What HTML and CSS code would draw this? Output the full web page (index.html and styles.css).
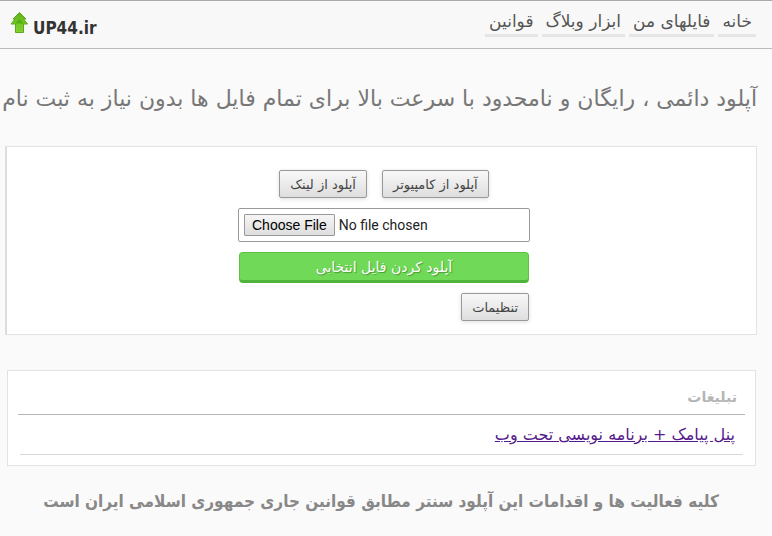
FILE: index.html
```html
<!DOCTYPE html>
<html lang="fa" dir="rtl">
<head>
    <meta charset="UTF-8">
    <meta name="viewport" content="width=device-width, initial-scale=1.0">
    <title>UP44.ir</title>
    <link rel="stylesheet" href="styles.css">
</head>
<body>

    <!-- Header -->
    <header class="header">
        <nav class="menu">
            <a href="#">خانه</a>
            <a href="#">فایلهای من</a>
            <a href="#">ابزار وبلاگ</a>
            <a href="#">قوانین</a>
        </nav>
        <div class="brand" dir="ltr">
            <svg class="logo" width="19" height="22" viewBox="0 0 19 22">
                <defs>
                    <linearGradient id="leaf" x1="0" y1="0" x2="0" y2="1">
                        <stop offset="0" stop-color="#5fb41a"/>
                        <stop offset="1" stop-color="#8ad62c"/>
                    </linearGradient>
                </defs>
                <path d="M10.500 1.500 L17 8 H14.500 L18.500 13 H14.500 V21.500 H6.500 V13 H2 L6 8 H4 Z" fill="url(#leaf)" stroke="#5aa81c" stroke-linejoin="round"/>
                <path d="M10.500 8 L15 12.500 H6 Z" fill="#56ad14"/>
                <path d="M8 13 H13 V20 H8 Z" fill="#7ac92b"/>
            </svg>
            <span>UP44.ir</span>
        </div>
    </header>

    <main class="content">
        <h1 class="slogan">آپلود دائمی ، رایگان و نامحدود با سرعت بالا برای تمام فایل ها بدون نیاز به ثبت نام</h1>

        <!-- Upload box -->
        <form class="upload">
            <div class="tabs">
                <button type="button" class="btn">آپلود از کامپیوتر</button>
                <button type="button" class="btn">آپلود از لینک</button>
            </div>
            <input type="file" class="file" dir="ltr" aria-label="انتخاب فایل">
            <button type="button" class="send">آپلود کردن فایل انتخابی</button>
            <div class="options">
                <button type="button" class="btn">تنظیمات</button>
            </div>
        </form>

        <!-- Ads -->
        <section class="ads">
            <h2>تبلیغات</h2>
            <div class="ad">
                <a href="#">پنل پیامک + برنامه نویسی تحت وب</a>
            </div>
        </section>
    </main>

    <footer class="footer">کلیه فعالیت ها و اقدامات این آپلود سنتر مطابق قوانین جاری جمهوری اسلامی ایران است</footer>

</body>
</html>
```
FILE: styles.css
```css
* {
    box-sizing: border-box;
}
body {
    margin: 0;
    background: #fafafa;
    color: #333;
    font-family: "DejaVu Sans", sans-serif;
}
.header {
    display: flex;
    justify-content: space-between;
    align-items: flex-start;
    height: 49px;
    padding: 8px 16px 0 9px;
    background: #f8f8f8;
    border-top: 1px solid #aaa;
    border-bottom: 1px solid #bbb;
}
.menu {
    display: flex;
    gap: 4px;
}
.menu a {
    padding: 0 4px;
    height: 28px;
    border-bottom: 3px solid #e5e5e5;
    color: #555;
    font-size: 17px;
    line-height: 25px;
    text-decoration: none;
}
.brand {
    display: flex;
    gap: 5px;
    padding-top: 2px;
    font-family: "DejaVu Sans Condensed", "DejaVu Sans", sans-serif;
    font-size: 17px;
    font-weight: bold;
    line-height: 34px;
}
.content {
    padding: 0 15px 0 5px;
}
.slogan {
    margin: 0;
    padding: 33px 0 30px;
    color: #777;
    font-size: 22px;
    font-weight: normal;
    line-height: 34px;
    white-space: nowrap;
}
.upload {
    display: flex;
    flex-direction: column;
    align-items: center;
    gap: 10px;
    padding: 23px 0 13px 5px;
    background: #fff;
    border: 1px solid #e3e3e3;
    border-left: 2px solid #ddd;
}
.tabs {
    display: flex;
    gap: 15px;
}
.btn {
    height: 28px;
    padding: 0 10px;
    background: linear-gradient(#f8f8f8, #dedede);
    border: 1px solid #999;
    border-radius: 2px;
    box-shadow: 0 1px 4px #ddd;
    color: #444;
    font-family: "DejaVu Sans", sans-serif;
    font-size: 13px;
}
.file {
    width: 292px;
    height: 34px;
    padding: 5px;
    border: 1px solid #999;
    border-radius: 2px;
    background: #fff;
    color: #222;
    font-family: Roboto, sans-serif;
    font-size: 14px;
    line-height: 22px;
}
.file::file-selector-button {
    height: 22px;
    margin: 0 4px 0 0;
    padding: 0 7px;
    background: linear-gradient(#f6f6f6, #dedede);
    border: 1px solid #999;
    border-radius: 1px;
    color: #000;
    font-family: "Liberation Sans", sans-serif;
    font-size: 14px;
}
.send {
    width: 290px;
    height: 31px;
    padding: 0;
    background: #71d958;
    border: 1px solid #5cc144;
    border-bottom: 3px solid #50b33a;
    border-radius: 4px;
    color: #fff;
    font-family: "DejaVu Sans", sans-serif;
    font-size: 14px;
    text-shadow: 1px 1px 1px #4a9a38;
}
.options {
    width: 290px;
}
.ads {
    margin: 35px 1px 0 2px;
    padding: 10px;
    background: #fff;
    border: 1px solid #e3e3e3;
}
.ads h2 {
    margin: 0;
    padding: 0 8px;
    border-bottom: 1px solid #b5b5b5;
    color: #b5b5b5;
    font-size: 14px;
    line-height: 33px;
}
.ad {
    margin: 0 2px;
    padding: 0 8px;
    border-bottom: 1px solid #d8d8d8;
    font-size: 16px;
    line-height: 39px;
}
.ad a {
    color: #551a8b;
}
.footer {
    padding: 20px 10px 20px 0;
    color: #888;
    font-family: "DejaVu Sans Condensed", "DejaVu Sans", sans-serif;
    font-size: 17px;
    font-weight: bold;
    line-height: 30px;
    text-align: center;
}
```
